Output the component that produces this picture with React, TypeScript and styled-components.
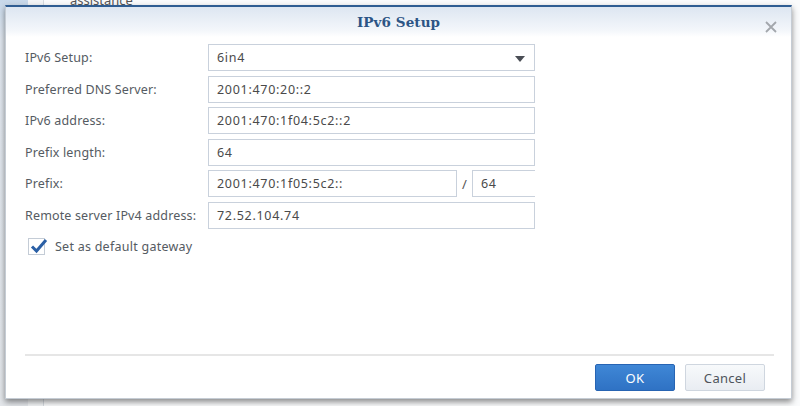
import React from "react";
import styled, { createGlobalStyle } from "styled-components";

const Global = createGlobalStyle`
  html, body { margin: 0; padding: 0; }
  body {
    width: 800px; height: 406px; overflow: hidden; background: #fff;
    font-family: "Noto Sans", "DejaVu Sans", sans-serif;
  }
`;

const Page = styled.div`
  position: relative;
  width: 800px;
  height: 406px;
  display: flex;
  background: #fafbfc;
`;

const Sidebar = styled.div`
  width: 28px;
  background: linear-gradient(180deg, #c7d8ea 0px, #dfe6ee 40px, #e4e7eb 100%);
`;

const SideGap = styled.div`
  width: 15px;
  border-right: 1px solid #d6dbe1;
  background: #f3f5f7;
`;

const Content = styled.div`
  flex: 1;
  padding-left: 26px;
  font-size: 13px;
  color: #555;
  line-height: 1;
  margin-top: -6px;
`;

const Dialog = styled.div`
  position: absolute;
  left: 5px;
  top: 5px;
  width: 785px;
  height: 391px;
  background: #fff;
  border: 1px solid #c5ccd4;
  border-top: 2px solid #2f5d92;
  box-shadow: 0 3px 6px rgba(0, 0, 0, 0.45);
  display: flex;
  flex-direction: column;
`;

const Header = styled.div`
  height: 30px;
  flex: none;
  display: flex;
  align-items: center;
  justify-content: center;
  position: relative;
  background: linear-gradient(180deg, #dde6f1 0%, #f4f7fb 80%, #ffffff 100%);
`;

const Title = styled.div`
  font-family: "DejaVu Serif", serif;
  font-weight: bold;
  font-size: 13.5px;
  color: #2c5585;
  letter-spacing: 0.1px;
`;

const Close = styled.div`
  position: absolute;
  right: 14px;
  top: 9px;
  width: 12px;
  height: 12px;
`;

const Body = styled.div`
  flex: 1;
  padding: 7px 19px 0 19px;
`;

const Form = styled.div`
  display: grid;
  grid-template-columns: 183px 327px;
  grid-auto-rows: 27px;
  row-gap: 4.6px;
  align-items: center;
`;

const Label = styled.div`
  font-size: 12.5px;
  letter-spacing: 0.15px;
  color: #555b62;
`;

const Field = styled.div<{ $w?: string; $open?: boolean }>`
  box-sizing: border-box;
  height: 27px;
  width: ${(p) => p.$w ?? "100%"};
  border: 1px solid #c9d1dc;
  ${(p) => (p.$open ? "border-right: none;" : "")}
  background: #fff;
  display: flex;
  align-items: center;
  padding: 0 8px;
  font-size: 12.5px;
  letter-spacing: 0.7px;
  color: #4a4a4a;
  position: relative;
`;

const Caret = styled.div`
  position: absolute;
  right: 9px;
  top: 11px;
  width: 0;
  height: 0;
  border-left: 5.5px solid transparent;
  border-right: 5.5px solid transparent;
  border-top: 6px solid #4a4e55;
`;

const PrefixRow = styled.div`
  display: flex;
  align-items: center;
  height: 27px;
`;

const Slash = styled.span`
  width: 15px;
  text-align: center;
  font-size: 13px;
  color: #555;
`;

const CheckRow = styled.div`
  display: flex;
  align-items: center;
  gap: 10px;
  margin-top: 8px;
  padding-left: 3px;
  height: 20px;
`;

const CheckBox = styled.div`
  width: 17px;
  height: 17px;
  box-sizing: border-box;
  border: 1px solid #c4ccd6;
  background: #fff;
  position: relative;
`;

const CheckLabel = styled.span`
  font-size: 12.5px;
  letter-spacing: 0.25px;
  color: #555b62;
`;

const Footer = styled.div`
  flex: none;
  margin: 0 17px 0 19px;
  border-top: 2px solid #e6e6e6;
  padding: 8px 9px 7px 0;
  display: flex;
  justify-content: flex-end;
  gap: 10px;
`;

const Button = styled.button<{ $primary?: boolean }>`
  width: 80px;
  height: 27px;
  border-radius: 2px;
  font-family: "Noto Sans", sans-serif;
  font-size: 13px;
  letter-spacing: 0.3px;
  cursor: pointer;
  border: 1px solid ${(p) => (p.$primary ? "#2764b3" : "#cfd6df")};
  color: ${(p) => (p.$primary ? "#fff" : "#4e545c")};
  background: ${(p) =>
    p.$primary
      ? "linear-gradient(180deg, #3f87d6 0%, #2f72c4 100%)"
      : "linear-gradient(180deg, #f7f9fb 0%, #e9edf2 100%)"};
`;

export default function App() {
  return (
    <>
      <Global />
      <Page>
        <Sidebar />
        <SideGap />
        <Content>assistance</Content>
        <Dialog>
          <Header>
            <Title>IPv6 Setup</Title>
            <Close>
              <svg width="12" height="12" viewBox="0 0 12 12">
                <path d="M1 1L11 11M11 1L1 11" stroke="#a3a7ac" strokeWidth="1.8" />
              </svg>
            </Close>
          </Header>
          <Body>
            <Form>
              <Label>IPv6 Setup:</Label>
              <Field>
                6in4
                <Caret />
              </Field>
              <Label>Preferred DNS Server:</Label>
              <Field>2001:470:20::2</Field>
              <Label>IPv6 address:</Label>
              <Field>2001:470:1f04:5c2::2</Field>
              <Label>Prefix length:</Label>
              <Field>64</Field>
              <Label>Prefix:</Label>
              <PrefixRow>
                <Field $w="249px">2001:470:1f05:5c2::</Field>
                <Slash>/</Slash>
                <Field $w="63px" $open>64</Field>
              </PrefixRow>
              <Label>Remote server IPv4 address:</Label>
              <Field>72.52.104.74</Field>
            </Form>
            <CheckRow>
              <CheckBox>
                <svg width="19" height="17" viewBox="0 0 19 17" style={{ position: "absolute", left: 0, top: -2 }}>
                  <path d="M3 9.5L7.5 14L17 3" stroke="#2a5fa5" strokeWidth="3" fill="none" />
                </svg>
              </CheckBox>
              <CheckLabel>Set as default gateway</CheckLabel>
            </CheckRow>
          </Body>
          <Footer>
            <Button $primary>OK</Button>
            <Button>Cancel</Button>
          </Footer>
        </Dialog>
      </Page>
    </>
  );
}
